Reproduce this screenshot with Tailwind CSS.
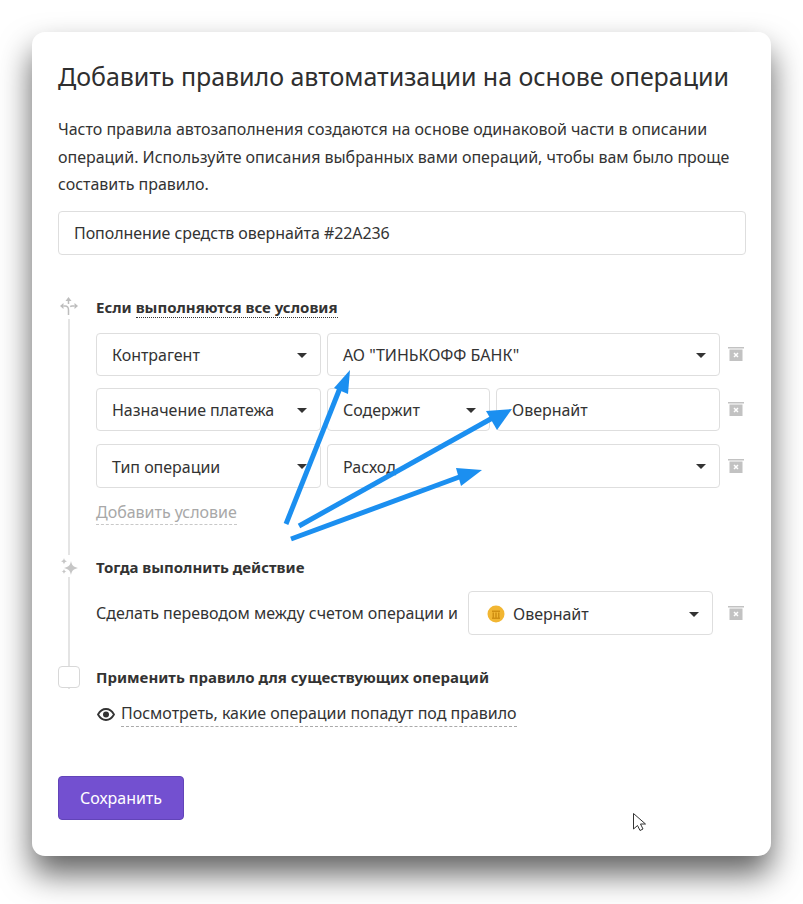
<!DOCTYPE html>
<html lang="ru">
<head>
  <meta charset="UTF-8"/>
  <title>Добавить правило</title>
  <script src="https://cdn.jsdelivr.net/npm/@tailwindcss/browser@4"></script>
</head>
<body class="bg-white w-[803px] h-[904px] overflow-hidden font-['Noto_Sans',sans-serif] text-[#333] text-[16px] tracking-[-0.02px]">

  <!-- Card -->
  <div class="relative ml-[32px] mt-[32px] w-[739px] h-[824px] bg-white rounded-[13px] shadow-[0_18px_32px_rgba(0,0,0,0.62)] px-[26px] pt-[26px]">
    <h1 class="text-[25px] leading-[36px] tracking-[-0.04px] text-[#2f2f2f]">Добавить правило автоматизации на основе операции</h1>

    <p class="mt-[22px] leading-[27.5px] w-[688px]">Часто правила автозаполнения создаются на основе одинаковой части в описании операций. Используйте описания выбранных вами операций, чтобы вам было проще составить правило.</p>

    <div class="mt-[12px] h-[44px] w-[688px] border border-[#dedede] rounded-[4px] flex items-center px-[15px] tracking-[-0.07px]">Пополнение средств овернайта #22А236</div>

    <!-- Rule tree -->
    <div class="relative mt-[45px] pl-[38px]">
      <div class="absolute left-[10px] top-[19px] h-[370px] w-[2px] bg-[#e4e4e4]"></div>

      <svg class="absolute left-[1px] top-[-3px]" width="20" height="20" viewBox="0 0 20 20">
        <g fill="#bdbdbd">
          <path d="M9.500 0L12.500 4H6.500z"/>
          <path d="M1 9l3.500-3v6z"/>
          <path d="M19 9l-3.500-3v6z"/>
        </g>
        <path d="M9.500 4v3M4.500 9H6c2.300 0 3.500 1.500 3.500 4v5M15.500 9H13c-.7 0-1.300.2-1.800.6" fill="none" stroke="#bdbdbd" stroke-width="1.500"/>
      </svg>

      <div class="h-[16px] flex items-center font-bold text-[15px] tracking-[0px] leading-none"><span>Если&nbsp;</span><span class="border-b border-dotted border-[#333] pb-[2px] mt-[2px]">выполняются все условия</span></div>

      <div class="mt-[17px] flex flex-col">
        <div class="flex items-center">
          <div class="flex gap-[6px]">
            <div class="w-[225px] h-[43px] border border-[#dedede] rounded-[4px] flex items-center justify-between pl-[15px] pr-[13px] pt-[2px]">Контрагент<i class="border-x-[5px] border-t-[5px] border-x-transparent border-t-[#333]"></i></div>
            <div class="w-[393px] h-[43px] border border-[#dedede] rounded-[4px] flex items-center justify-between pl-[15px] pr-[13px] pt-[2px]">АО "ТИНЬКОФФ БАНК"<i class="border-x-[5px] border-t-[5px] border-x-transparent border-t-[#333]"></i></div>
          </div>
          <svg class="ml-[8px]" width="16" height="16" viewBox="0 0 16 16"><path fill="#c2c2c2" d="M0 1h16v1.500H0zM1.500 3.500h13V15h-13z"/><path stroke="#fff" stroke-width="1.500" d="M6 7l4 4M10 7l-4 4"/></svg>
        </div>
        <div class="mt-[12px] flex items-center">
          <div class="flex gap-[6px]">
            <div class="w-[225px] h-[43px] border border-[#dedede] rounded-[4px] flex items-center justify-between pl-[15px] pr-[13px] pt-[2px]">Назначение платежа<i class="border-x-[5px] border-t-[5px] border-x-transparent border-t-[#333]"></i></div>
            <div class="w-[163px] h-[43px] border border-[#dedede] rounded-[4px] flex items-center justify-between pl-[15px] pr-[13px] pt-[2px]">Содержит<i class="border-x-[5px] border-t-[5px] border-x-transparent border-t-[#333]"></i></div>
            <div class="w-[224px] h-[43px] border border-[#dedede] rounded-[4px] flex items-center pl-[15px] pt-[2px]">Овернайт</div>
          </div>
          <svg class="ml-[8px]" width="16" height="16" viewBox="0 0 16 16"><path fill="#c2c2c2" d="M0 1h16v1.500H0zM1.500 3.500h13V15h-13z"/><path stroke="#fff" stroke-width="1.500" d="M6 7l4 4M10 7l-4 4"/></svg>
        </div>
        <div class="mt-[13px] flex items-center">
          <div class="flex gap-[6px]">
            <div class="w-[225px] h-[44px] border border-[#dedede] rounded-[4px] flex items-center justify-between pl-[15px] pr-[13px] pt-[2px]">Тип операции<i class="border-x-[5px] border-t-[5px] border-x-transparent border-t-[#333]"></i></div>
            <div class="w-[393px] h-[44px] border border-[#dedede] rounded-[4px] flex items-center justify-between pl-[15px] pr-[13px] pt-[2px]">Расход<i class="border-x-[5px] border-t-[5px] border-x-transparent border-t-[#333]"></i></div>
          </div>
          <svg class="ml-[8px]" width="16" height="16" viewBox="0 0 16 16"><path fill="#c2c2c2" d="M0 1h16v1.500H0zM1.500 3.500h13V15h-13z"/><path stroke="#fff" stroke-width="1.500" d="M6 7l4 4M10 7l-4 4"/></svg>
        </div>
      </div>

      <div class="mt-[13px] leading-[22.5px]"><span class="text-[#a8a8a8] border-b border-dashed border-[#c8c8c8] pb-[1px]">Добавить условие</span></div>

      <!-- Then -->
      <div class="relative mt-[32px] font-bold text-[15px] tracking-[0px] leading-[24px]">
        <svg class="absolute left-[-38px] top-[0px] bg-white" width="22" height="22" viewBox="0 0 22 22" fill="#c6c6c6">
          <path d="M13 6c.8 4.500 2.500 6 7 7-4.500 1-6.200 2.500-7 7-.8-4.500-2.500-6-7-7 4.500-1 6.200-2.500 7-7z"/>
          <path d="M6 3c.4 2 1.200 2.800 3 3.200C7.200 6.600 6.400 7.400 6 9.400c-.4-2-1.200-2.800-3-3.200C4.800 5.800 5.600 5 6 3zM6 14c.3 1.600 1 2.300 2.500 2.500C7 16.700 6.300 17.400 6 19c-.3-1.600-1-2.300-2.500-2.500C5 16.300 5.700 15.600 6 14z"/>
        </svg>
        Тогда выполнить действие
      </div>

      <div class="mt-[12px] flex items-center">
        <span class="w-[372px]">Сделать переводом между счетом операции и</span>
        <div class="w-[245px] h-[44px] border border-[#dedede] rounded-[4px] flex items-center pl-[18px] pr-[13px] pt-[2px]">
          <svg width="18" height="18" viewBox="0 0 18 18"><circle cx="9" cy="9" r="8.500" fill="#f2b632"/><path fill="#d08f12" d="M5 5.500h8V7H5zM5.500 7.500h1.500v5H5.500zM8.250 7.500h1.500v5h-1.500zM11 7.500h1.500v5H11zM5 12.500h8V14H5z"/></svg>
          <span class="ml-[8px]">Овернайт</span>
          <i class="ml-auto border-x-[5px] border-t-[5px] border-x-transparent border-t-[#333]"></i>
        </div>
        <svg class="ml-[15px]" width="16" height="16" viewBox="0 0 16 16"><path fill="#c2c2c2" d="M0 1h16v1.500H0zM1.500 3.500h13V15h-13z"/><path stroke="#fff" stroke-width="1.500" d="M6 7l4 4M10 7l-4 4"/></svg>
      </div>

      <!-- Apply -->
      <div class="relative mt-[31px] font-bold text-[15px] tracking-[0px] leading-[22px]">
        <div class="absolute left-[-38px] top-[0px] w-[22px] h-[22px] bg-white border border-[#d8d8d8] rounded-[4px]"></div>
        Применить правило для существующих операций
      </div>

      <div class="mt-[14px] flex items-center leading-[22.5px]">
        <svg class="ml-[1px]" width="18" height="13" viewBox="0 0 18 13" fill="none" stroke="#333" stroke-width="1.800"><path d="M1 6.500C3 3 5.800 1 9 1s6 2 8 5.500C15 10 12.200 12 9 12S3 10 1 6.500z"/><circle cx="9" cy="6.500" r="3" fill="#333" stroke="none"/></svg>
        <span class="ml-[6px] border-b border-dashed border-[#aaa] pb-[1px]">Посмотреть, какие операции попадут под правило</span>
      </div>
    </div>

    <button class="mt-[49px] w-[126px] h-[44px] bg-[#7350d0] border border-[#6244b8] rounded-[4px] text-white">Сохранить</button>

    <!-- Screenshot annotations -->
    <svg class="absolute left-[-32px] top-[-32px] pointer-events-none" width="803" height="904" viewBox="0 0 803 904" fill="none">
      <g stroke="#1b8ff0" stroke-width="5">
        <path d="M286 524L340 388"/>
        <path d="M299 526L496 416"/>
        <path d="M291 539L462 476"/>
      </g>
      <g fill="#1b8ff0">
        <path d="M350 370L348 394L334 388z"/>
        <path d="M512 409L497 430L486 411z"/>
        <path d="M482 470L461 486L456 468z"/>
      </g>
      <path d="M633.500 813.500V829l4-3.500 2.500 5 3-1.500-2.500-5h5z" fill="#fff" stroke="#333" stroke-width="1"/>
    </svg>
  </div>
</body>
</html>
